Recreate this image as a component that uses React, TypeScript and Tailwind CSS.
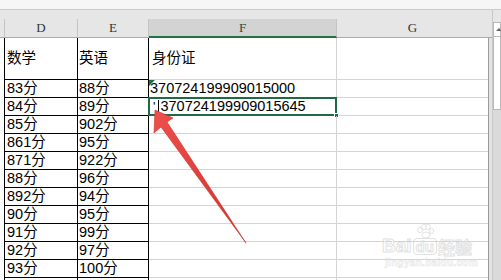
import React from 'react';

const scores: [string, string][] = [
  ['83分', '88分'],
  ['84分', '89分'],
  ['85分', '902分'],
  ['861分', '95分'],
  ['871分', '922分'],
  ['88分', '96分'],
  ['892分', '94分'],
  ['90分', '95分'],
  ['91分', '99分'],
  ['92分', '97分'],
  ['93分', '100分'],
  ['', ''],
];

const cellFont = 'font-["Liberation_Sans","Noto_Sans_CJK_SC",sans-serif] text-[14.5px] text-black leading-none';

const ColHeader: React.FC<{ label: string; width: string; active?: boolean }> = ({ label, width, active }) => (
  <div
    className={`${width} h-full flex items-center justify-center border-r border-[#c4c4c4] font-["Liberation_Serif",serif] text-[13px] ${
      active ? 'bg-[#d3d3d3] border-b-2 border-b-[#217346] text-[#1f4e33]' : 'bg-[#e6e6e6] border-b border-b-[#ababab] text-[#333]'
    }`}
  >
    {label}
  </div>
);

const Row: React.FC<{ tall?: boolean; d: React.ReactNode; e: React.ReactNode; f?: React.ReactNode }> = ({ tall, d, e, f }) => (
  <div className={`flex shrink-0 ${tall ? 'h-[42px]' : 'h-[18px]'}`}>
    <div className="w-[5px] border-r border-black bg-white" />
    <div className={`w-[73px] border-r border-b border-black flex items-center pl-[2px] ${cellFont}`}>{d}</div>
    <div className={`w-[71px] border-r border-b border-black flex items-center pl-[1px] ${cellFont}`}>{e}</div>
    <div className={`w-[188px] border-b border-[#d4d4d4] border-r flex items-center relative ${cellFont}`}>{f}</div>
    <div className="w-[151px] border-b border-[#d4d4d4]" />
    <div className="w-[4px] border-l border-[#9a9a9a] bg-[#e3e3e3]" />
  </div>
);

export default function App() {
  return (
    <div className="w-[501px] h-[280px] overflow-hidden relative bg-white flex flex-col">
      {/* formula bar edge */}
      <div className="h-[10px] shrink-0 bg-[#f6f6f6] border-b border-[#cacaca]" />

      <div className="flex flex-1 min-h-0">
        {/* grid */}
        <div className="w-[492px] flex flex-col">
          <div className="h-[9px] shrink-0 bg-[#e6e6e6]" />
          <div className="h-[19px] shrink-0 flex">
            <div className="w-[5px] h-full bg-[#e6e6e6] border-r border-[#c4c4c4] border-b border-b-[#ababab]" />
            <ColHeader label="D" width="w-[73px]" />
            <ColHeader label="E" width="w-[71px]" />
            <ColHeader label="F" width="w-[188px]" active />
            <div className="w-[151px] h-full flex items-center justify-center bg-[#e6e6e6] border-b border-[#ababab] font-['Liberation_Serif',serif] text-[13px] text-[#333]">
              G
            </div>
            <div className="w-[4px] h-full bg-[#e6e6e6] border-b border-[#ababab]" />
          </div>

          <Row tall d="数学" e="英语" f={<span className="pl-[3px]">身份证</span>} />
          {scores.map(([d, e], i) => (
            <Row
              key={i}
              d={d}
              e={e}
              f={
                i === 0 ? (
                  <>
                    <span className="absolute left-0 top-0 w-0 h-0 border-t-[6px] border-t-[#1e7145] border-r-[6px] border-r-transparent" />
                    <span className="pl-[1px]">370724199909015000</span>
                  </>
                ) : i === 1 ? (
                  <>
                    <span className="absolute -left-px -top-px -right-px -bottom-px border-2 border-[#1e6b41]" />
                    <span className="absolute -right-[3px] -bottom-[3px] w-[5px] h-[5px] bg-[#1e6b41] border border-white" />
                    <span className="pl-[4px] text-[13px] self-start pt-[2px]">'</span>
                    <span className="ml-[3px] w-px h-[14px] bg-black" />
                    <span className="ml-[1px]">370724199909015645</span>
                  </>
                ) : null
              }
            />
          ))}
        </div>

        {/* vertical scrollbar */}
        <div className="w-[9px] flex flex-col bg-[#dadada] border-l border-[#c8c8c8]">
          <div className="h-[12px] shrink-0 bg-[#e6e6e6]" />
          <div className="h-[15px] shrink-0 bg-white border border-[#b8b8b8] flex items-center justify-start pl-[2px]">
            <span className="w-0 h-0 border-l-[3px] border-r-[3px] border-b-[3px] border-l-transparent border-r-transparent border-b-[#666]" />
          </div>
          <div className="h-[73px] shrink-0 bg-white border border-t-0 border-[#b8b8b8]" />
        </div>
      </div>

      {/* red pointer arrow */}
      <svg className="absolute left-0 top-0 pointer-events-none" width="501" height="280" viewBox="0 0 501 280">
        <defs>
          <linearGradient id="arrowFill" x1="0" y1="0" x2="1" y2="1">
            <stop offset="0" stopColor="#f0504c" />
            <stop offset="1" stopColor="#d0302c" />
          </linearGradient>
        </defs>
        <polygon
          points="155,110 173,118 167,122 246,243 161,127 154,133"
          fill="url(#arrowFill)"
          stroke="#c9302c"
          strokeWidth="0.6"
          strokeLinejoin="round"
        />
      </svg>

      {/* watermark */}
      <div className="absolute left-[382px] top-[224px] flex flex-col items-start pointer-events-none opacity-60">
        <div className="flex items-end gap-[1px]">
          <span className="font-['Liberation_Sans',sans-serif] font-bold text-[19px] leading-none text-white [-webkit-text-stroke:1px_#cfcfcf]">
            Bai
          </span>
          <div className="flex flex-col items-center">
            <svg width="18" height="14" viewBox="0 0 18 14">
              <g fill="white" stroke="#cfcfcf" strokeWidth="1">
                <ellipse cx="4" cy="6" rx="2.2" ry="2.8" />
                <ellipse cx="8" cy="3" rx="2.2" ry="2.8" />
                <ellipse cx="12" cy="3" rx="2.2" ry="2.8" />
                <ellipse cx="15.5" cy="7" rx="2" ry="2.6" />
                <ellipse cx="10" cy="11" rx="4" ry="3" />
              </g>
            </svg>
            <span className="px-[2px] rounded-[4px] border border-[#cfcfcf] font-['Liberation_Sans',sans-serif] font-bold text-[15px] leading-none text-white [-webkit-text-stroke:1px_#cfcfcf]">
              du
            </span>
          </div>
          <span className="font-['Noto_Sans_CJK_SC',sans-serif] font-bold text-[17px] leading-none text-white [-webkit-text-stroke:1px_#cfcfcf]">
            经验
          </span>
        </div>
        <span className="mt-[3px] pl-[3px] font-['Liberation_Sans',sans-serif] font-bold text-[10px] leading-none text-white [-webkit-text-stroke:0.6px_#d6d6d6] tracking-[0.3px]">
          jingyan.baidu.com
        </span>
      </div>
    </div>
  );
}
